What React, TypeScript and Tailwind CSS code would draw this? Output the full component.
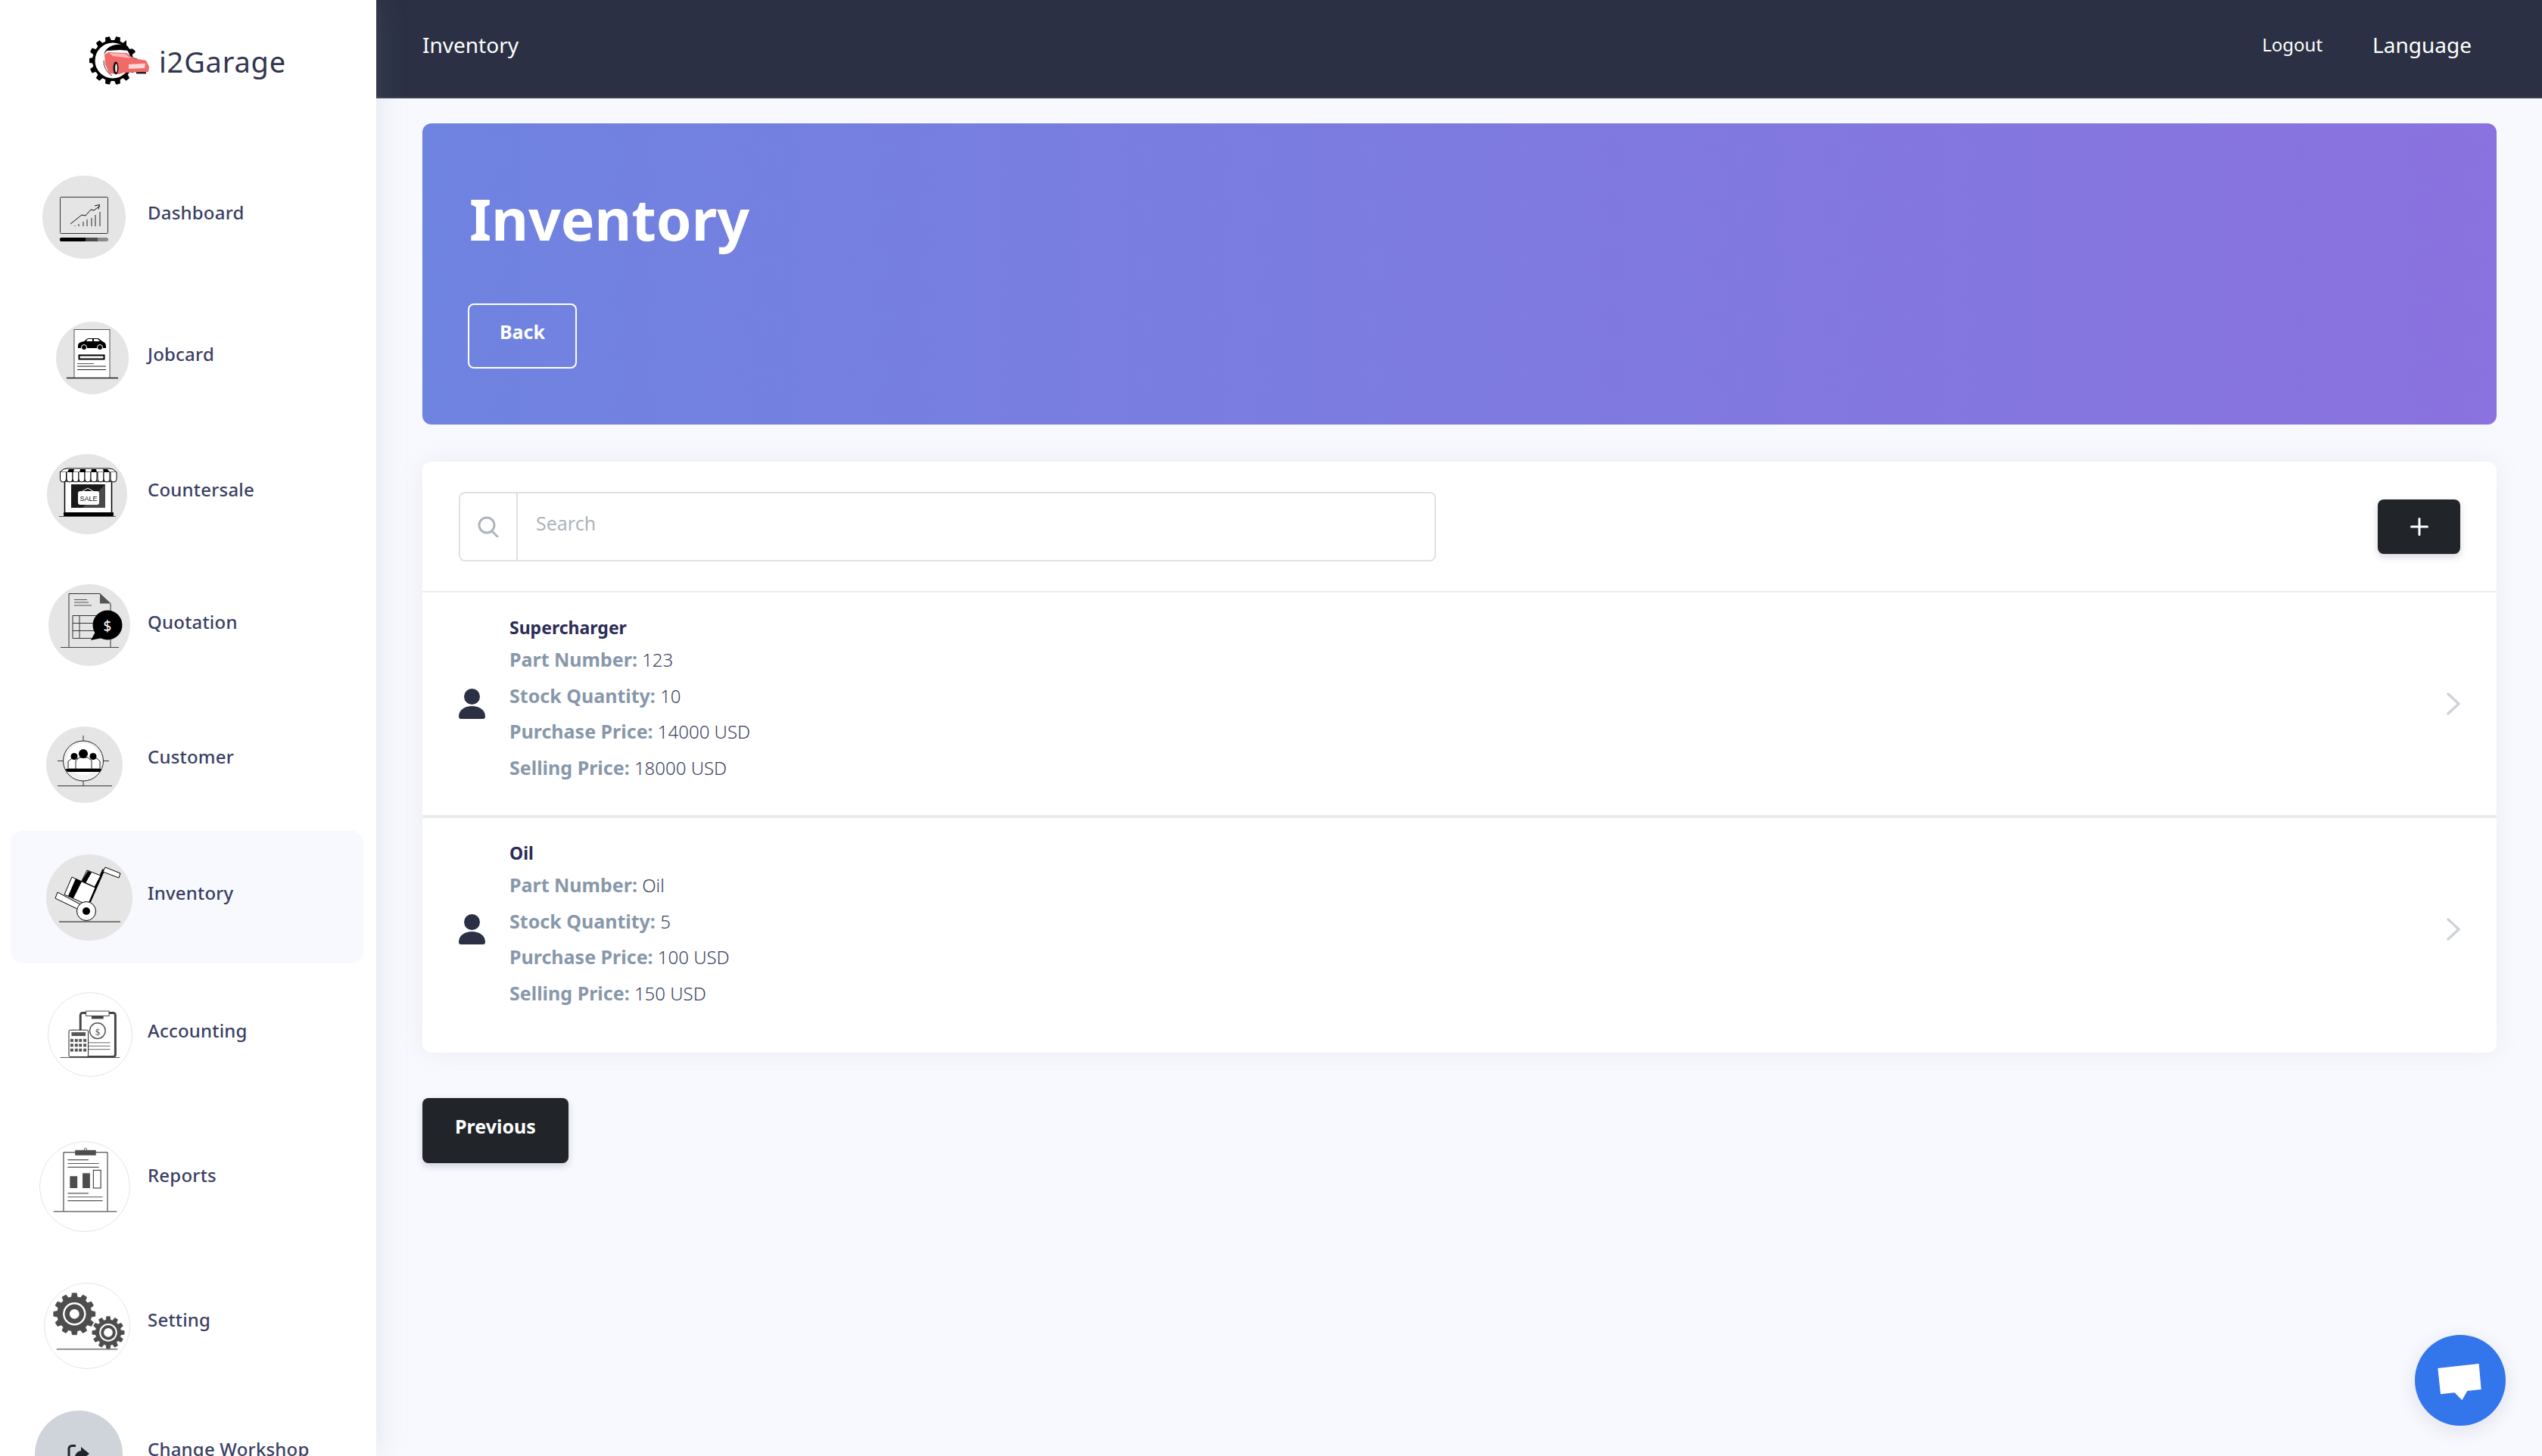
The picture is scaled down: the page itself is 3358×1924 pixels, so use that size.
import { useMemo } from 'react'

// gear outline with trapezoid teeth, used by the logo and the Setting icon
const gearPath = (cx: number, cy: number, rOut: number, rIn: number, teeth: number) => {
  const pts: string[] = []
  const step = (Math.PI * 2) / teeth
  for (let i = 0; i < teeth; i++) {
    const a = i * step
    const at = (r: number, t: number) =>
      `${(cx + r * Math.cos(a + t * step)).toFixed(2)} ${(cy + r * Math.sin(a + t * step)).toFixed(2)}`
    pts.push(at(rIn, -0.32), at(rOut, -0.2), at(rOut, 0.2), at(rIn, 0.32))
  }
  return `M${pts.join('L')}Z`
}

const Logo = () => (
  <svg className="w-[80px] h-[66px] shrink-0" viewBox="118 47 80 66">
    <path d={gearPath(149, 80, 32, 27, 14)} fill="#000" />
    <circle cx="149" cy="80" r="23.500" fill="#fff" />
    <path d="M137 72c3-9 12-14 22-13 5 1 9 4 12 8l-12-1-18 1z" fill="#000" />
    <path d="M137 80a22 22 0 0 0 11 20" stroke="#333" strokeWidth="1" fill="none" />
    <path d="M167 50l9 4 3 13-12-7z" fill="#fff" />
    <path d="M166 60a24 24 0 0 1 5 8" stroke="#000" strokeWidth="0.800" fill="none" />
    <rect x="176" y="92" width="22" height="21" fill="#fff" />
    <path d="M138 72l5-3 24 1 10 7 16 3 4 8-1 7-32 1-7 2-13-1-5-12z" fill="#f06a69" />
    <path d="M144 70l21 1 8 6-24-3z" fill="#f9b6b4" />
    <path d="M170 85l22-1-1 6-21 1z" fill="#fff" opacity="0.75" />
    <ellipse cx="153" cy="90" rx="3.500" ry="8.500" fill="#111" />
    <ellipse cx="153.500" cy="90" rx="1.300" ry="5.500" fill="#fff" />
    <rect x="180" y="95" width="13" height="2.500" fill="#222" />
  </svg>
)

const DashboardIcon = () => (
  <svg className="w-full h-full" viewBox="56 232 110 110">
    <rect x="79.500" y="260.500" width="63" height="48" rx="1" fill="none" stroke="#333" strokeWidth="1" />
    <path d="M93 296l15-12 5 1 7-8 4 1 8-6" fill="none" stroke="#111" strokeWidth="1" />
    <path d="M125 272l6.500-1.500-1.500 6" fill="none" stroke="#111" strokeWidth="1" />
    <path d="M99 299v-1M104 299v-3M110 299v-6M115 299v-9M121 299v-11M126 299v-15M132 299v-19" stroke="#222" strokeWidth="1" />
    <rect x="79" y="314" width="64" height="5" rx="2.500" fill="#8a8a8a" />
    <path d="M81.500 314H129v5H81.500a2.500 2.500 0 0 1 0-5z" fill="#4c4c4c" />
    <path d="M81.500 314H113v5H81.500a2.500 2.500 0 0 1 0-5z" fill="#000" />
  </svg>
)

const JobcardIcon = () => (
  <svg className="w-full h-full" viewBox="74 425 96 96">
    <rect x="98" y="435.500" width="47" height="64" fill="#fff" stroke="#555" strokeWidth="1" />
    <path d="M103 457c0-3 2-5 8-6l5-4h14l5 4c3 1 5 3 5 6v3h-37z" fill="#000" />
    <path d="M116 448h6v3h-8zM124 448h5l3 3h-8z" fill="#fff" />
    <circle cx="111" cy="459" r="3.500" fill="#000" stroke="#fff" strokeWidth="1" />
    <circle cx="132" cy="459" r="3.500" fill="#000" stroke="#fff" strokeWidth="1" />
    <rect x="104.500" y="469.500" width="33" height="5" fill="#fff" stroke="#000" strokeWidth="2" />
    <path d="M102 480.500h22" stroke="#555" strokeWidth="1" />
    <path d="M102 484h38M102 488.500h38" stroke="#222" strokeWidth="1" />
    <path d="M88 499.500h68" stroke="#222" strokeWidth="1.500" />
  </svg>
)

const CountersaleIcon = () => (
  <svg className="w-full h-full" viewBox="62 600 106 106">
    <rect x="85.500" y="636" width="62" height="43" fill="#fff" stroke="#000" strokeWidth="1.500" />
    <rect x="94" y="640" width="45" height="31" fill="#1a1a1a" />
    <path d="M139 640v31h-30z" fill="#4a4a4a" />
    <path d="M84 620l5-1h55l5 1 5 4H79z" fill="#fff" stroke="#000" strokeWidth="1" />
    <path d="M91 620h7l-1 4h-8zM106 620h7l0 4h-8zM121 620h6l1 4h-8zM136 620h6l3 4h-8z" fill="#000" />
    {[79.500, 88, 96, 104, 112, 120, 129, 137, 146].map((x) => (
      <path key={x} d={`M${x} 624v9a4 4 0 0 0 8 0v-9`} fill="#fff" stroke="#000" strokeWidth="1" />
    ))}
    <path d="M109 649l7-4 7 4" fill="none" stroke="#fff" strokeWidth="1" />
    <rect x="103" y="649" width="28" height="18" rx="3" fill="#fff" />
    <text x="117" y="662" textAnchor="middle" fontSize="9" fontWeight="500" fill="#111" fontFamily="'Liberation Sans', sans-serif">SALE</text>
    <rect x="84" y="677" width="66" height="5" rx="1" fill="#000" />
    <path d="M78 682.500h75" stroke="#555" strokeWidth="1" />
  </svg>
)

const QuotationIcon = () => (
  <svg className="w-full h-full" viewBox="64 772 108 108">
    <path d="M91 855V784.500h41l14 13V855" fill="none" stroke="#333" strokeWidth="1" />
    <path d="M132 784.500l14 13h-14z" fill="#555" />
    <path d="M98 792.500h17M98 796h19M98 800h23" stroke="#555" strokeWidth="1" />
    <path d="M96 813.500h35v30H96zM96 823.500h35M96 833.500h35M105 813.500v30" fill="none" stroke="#333" strokeWidth="1" />
    <circle cx="142" cy="826" r="19.500" fill="#000" />
    <path d="M126 835l-6 11 15-3z" fill="#000" />
    <text x="142" y="834" textAnchor="middle" fontSize="19" fill="#fff" fontFamily="'Noto Sans', sans-serif">$</text>
    <path d="M80 855.500h77" stroke="#444" strokeWidth="1" />
  </svg>
)

const CustomerIcon = () => (
  <svg className="w-full h-full" viewBox="61 960 101 101">
    <circle cx="110" cy="1005.500" r="26.500" fill="#f2f2f2" stroke="#222" strokeWidth="1" />
    <circle cx="110" cy="1003" r="21" fill="#fff" />
    <path d="M110 972v7M76 1005.500h8M136 1005.500h8M110 1032v7M76 1038.500h72" stroke="#333" strokeWidth="1" />
    <path d="M90 1016v-10l5-4h7l4 4v10zM117 1016v-10l4-4h7l4 4v10z" fill="#fff" stroke="#222" strokeWidth="1" />
    <path d="M100 1016v-11l5-4h11l5 4v11z" fill="#fff" stroke="#222" strokeWidth="1" />
    <circle cx="98" cy="999.500" r="4.500" fill="#000" />
    <circle cx="123" cy="999.500" r="4.500" fill="#000" />
    <circle cx="110" cy="996" r="6" fill="#000" />
    <path d="M86 1016h48l-2 4H89z" fill="#000" />
  </svg>
)

const InventoryIcon = () => (
  <svg className="w-full h-full" viewBox="61 1128 114 114">
    <path d="M78 1217h81" stroke="#555" strokeWidth="1.500" />
    <path d="M137 1148l-19 43" stroke="#000" strokeWidth="3.500" />
    <path d="M115 1149l18 7-8 15-17-8z" fill="#fff" stroke="#000" strokeWidth="1" />
    <path d="M116 1150l5 2-8 14-5-3z" fill="#000" />
    <path d="M95 1158l31 14-10 23-31-14z" fill="#fff" stroke="#000" strokeWidth="1" />
    <path d="M100 1160l8 4-11 22-7-3z" fill="#000" />
    <path d="M76 1178l30 16-2 7-31-15z" fill="#fff" stroke="#000" strokeWidth="1" strokeLinejoin="round" />
    <path d="M139 1145l20 8-2 6-21-8z" fill="#fff" stroke="#000" strokeWidth="1" strokeLinejoin="round" />
    <circle cx="114" cy="1203" r="12.500" fill="#fff" stroke="#000" strokeWidth="1" />
    <circle cx="114" cy="1203" r="5" fill="#000" />
  </svg>
)

const AccountingIcon = () => (
  <svg className="w-full h-full" viewBox="63 1311 112 112">
    <rect x="106" y="1338" width="47" height="59" rx="3" fill="#fff" stroke="#444" strokeWidth="3" />
    <rect x="121" y="1341" width="16" height="5" fill="#444" />
    <rect x="113.500" y="1335.500" width="31" height="6.500" fill="#fff" stroke="#444" strokeWidth="1" />
    <circle cx="129" cy="1362" r="10.500" fill="#fff" stroke="#555" strokeWidth="1.500" />
    <text x="129" y="1368" textAnchor="middle" fontSize="12" fill="#444" fontFamily="'Liberation Serif', serif">$</text>
    <path d="M117 1378h29M117 1382.500h29M117 1387h29" stroke="#666" strokeWidth="1" />
    <rect x="90.500" y="1361" width="26" height="36" rx="2" fill="#fff" stroke="#222" strokeWidth="1" />
    <rect x="94" y="1364" width="19" height="5" fill="#555" />
    {[1375, 1381.500, 1388].map((y) =>
      [92.500, 98.500, 104, 110].map((x) => <rect key={`${x}-${y}`} x={x} y={y - 2} width="4" height="4" fill="#555" />),
    )}
    <path d="M79 1398h80" stroke="#555" strokeWidth="1" />
  </svg>
)

const ReportsIcon = () => (
  <svg className="w-full h-full" viewBox="52 1508 120 120">
    <path d="M83.500 1601v-79h59v79" fill="none" stroke="#222" strokeWidth="1" />
    <circle cx="113" cy="1518" r="1.700" fill="none" stroke="#444" strokeWidth="0.800" />
    <rect x="99" y="1519" width="28" height="7" fill="#4d4d4d" />
    <path d="M89 1532h28M89 1537h42M89 1542h42M89 1577h28M89 1582h47M89 1587h47" stroke="#555" strokeWidth="1.200" />
    <rect x="92" y="1554" width="10" height="16" fill="#4d4d4d" />
    <rect x="109" y="1550" width="10" height="20" fill="#4d4d4d" />
    <rect x="123.500" y="1546" width="10" height="24" fill="#fff" stroke="#222" strokeWidth="1" />
    <path d="M70 1601.500h85" stroke="#222" strokeWidth="1" />
  </svg>
)

const SettingIcon = () => {
  const big = useMemo(() => gearPath(98, 1736, 28, 23, 12), [])
  const small = useMemo(() => gearPath(143.500, 1761, 21.500, 17, 12), [])
  return (
    <svg className="w-full h-full" viewBox="58 1695 114 114">
      <path d={big} fill="#4d4d4d" strokeLinejoin="round" stroke="#4d4d4d" strokeWidth="1" />
      <circle cx="98" cy="1736" r="15.500" fill="#fff" />
      <circle cx="98" cy="1736" r="13" fill="#4d4d4d" />
      <circle cx="98" cy="1736" r="6.500" fill="#fff" />
      <path d={small} fill="#4d4d4d" strokeLinejoin="round" stroke="#4d4d4d" strokeWidth="1" />
      <circle cx="143.500" cy="1761" r="12" fill="#fff" />
      <circle cx="143.500" cy="1761" r="10" fill="#4d4d4d" />
      <circle cx="143.500" cy="1761" r="6" fill="#fff" />
      <path d="M74 1783.500h82" stroke="#555" strokeWidth="1.200" />
    </svg>
  )
}

const WorkshopIcon = () => (
  <svg className="w-full h-full" viewBox="46 1864 116 116">
    <path d="M100 1910.500h-5a4 4 0 0 0-4 4v26a4 4 0 0 0 4 4h17" fill="none" stroke="#212529" strokeWidth="3" />
    <path d="M107 1912l11 9-11 9v-5c-5 0-7 1-9 5 0-7 3-12 9-13z" fill="#212529" />
  </svg>
)

const navItems = [
  { label: 'Dashboard', box: 'mt-0 h-[170px]', circle: 'ml-[42px] w-[110px] h-[110px] bg-[#e5e5e5]', text: 'mb-[12px]', Icon: DashboardIcon },
  { label: 'Jobcard', box: 'mt-[23px] h-[156px]', circle: 'ml-[60px] w-[96px] h-[96px] bg-[#e5e5e5]', text: 'mb-[10px]', Icon: JobcardIcon },
  { label: 'Countersale', box: 'mt-[19px] h-[165px]', circle: 'ml-[48px] w-[106px] h-[106px] bg-[#e5e5e5]', text: 'mb-[11px]', Icon: CountersaleIcon },
  { label: 'Quotation', box: 'mt-[7px] h-[167px]', circle: 'ml-[50px] w-[108px] h-[108px] bg-[#e5e5e5]', text: 'mb-[7px]', Icon: QuotationIcon },
  { label: 'Customer', box: 'mt-[21px] h-[161px]', circle: 'ml-[47px] w-[101px] h-[101px] bg-[#e5e5e5]', text: 'mb-[21px]', Icon: CustomerIcon },
  { label: 'Inventory', box: 'mt-[7px] h-[175px] bg-[#f8f9fe]', circle: 'ml-[47px] w-[114px] h-[114px] bg-[#e5e5e5]', text: 'mb-[11px]', Icon: InventoryIcon },
  { label: 'Accounting', box: 'mt-[8px] h-[171px]', circle: 'ml-[49px] w-[112px] h-[112px] border border-[#e5e5e5]', text: 'mb-[9px]', Icon: AccountingIcon },
  { label: 'Reports', box: 'mt-[26px] h-[179px]', circle: 'ml-[38px] w-[120px] h-[120px] border border-[#e5e5e5]', text: 'mb-[29px]', Icon: ReportsIcon },
  { label: 'Setting', box: 'mt-[8px] h-[173px]', circle: 'ml-[44px] w-[114px] h-[114px] border border-[#e5e5e5]', text: 'mb-[15px]', Icon: SettingIcon },
  { label: 'Change Workshop', box: '-mt-[4px] h-[176px]', circle: 'ml-[32px] w-[116px] h-[116px] bg-[#ced4da]', text: 'mb-[14px]', Icon: WorkshopIcon },
]

const parts = [
  {
    name: 'Supercharger',
    rows: [
      ['Part Number:', '123'],
      ['Stock Quantity:', '10'],
      ['Purchase Price:', '14000 USD'],
      ['Selling Price:', '18000 USD'],
    ],
  },
  {
    name: 'Oil',
    rows: [
      ['Part Number:', 'Oil'],
      ['Stock Quantity:', '5'],
      ['Purchase Price:', '100 USD'],
      ['Selling Price:', '150 USD'],
    ],
  },
]

const App = () => {
  return (
    <div className="h-screen flex overflow-hidden bg-[#f8f9fe] font-['Noto_Sans',sans-serif]">
      {/* sidebar */}
      <aside className="w-[497px] shrink-0 h-full bg-white shadow-[0_0_40px_rgba(136,152,170,0.2)] z-10 overflow-hidden">
        <div className="h-[202px] pt-[47px] pl-[118px] flex items-start">
          <Logo />
          <span className="ml-[12px] mt-[10px] text-[38px] leading-[48px] tracking-[0.8px] text-[#30354e]">i2Garage</span>
        </div>
        <nav className="ml-[14px] w-[466px]">
          {navItems.map(({ label, box, circle, text, Icon }) => (
            <div key={label} className={`flex items-center rounded-[16px] ${box}`}>
              <div className="w-[181px] shrink-0">
                <div className={`rounded-full overflow-hidden ${circle}`}>
                  <Icon />
                </div>
              </div>
              <span className={`text-[24px] font-medium leading-[32px] tracking-[0.2px] whitespace-nowrap text-[#3a3f63] ${text}`}>{label}</span>
            </div>
          ))}
        </nav>
      </aside>

      {/* main */}
      <main className="flex-1 min-w-0 flex flex-col">
        <header className="h-[130px] shrink-0 flex items-center justify-between pl-[61px] pr-[93px] bg-[#2b3044] border-b-2 border-[#3a3f52] text-white">
          <span className="text-[28px] leading-[40px] mb-[10px]">Inventory</span>
          <div className="flex items-center gap-[66px] mb-[10px]">
            <span className="text-[24px] leading-[40px]">Logout</span>
            <span className="text-[28px] leading-[40px]">Language</span>
          </div>
        </header>

        <div className="pl-[61px] pr-[60px] pt-[33px]">
          <section className="h-[398px] rounded-[12px] bg-gradient-to-r from-[#6f83e0] to-[#8a72df] pl-[60px] pt-[78px]">
            <h1 className="ml-[2px] text-[75px] leading-[96px] font-bold text-white">Inventory</h1>
            <button className="mt-[64px] block w-[144px] h-[86px] pb-[10px] rounded-[8px] border-2 border-white text-white text-[25px] font-bold">Back</button>
          </section>

          <section className="mt-[49px] rounded-[12px] bg-white pb-[16px] shadow-[0_0_32px_rgba(136,152,170,0.12)]">
            <div className="h-[173px] flex items-start justify-between pl-[48px] pr-[48px] border-b-2 border-[#e9ecef]">
              <div className="mt-[40px] w-[1291px] h-[92px] flex rounded-[8px] border-2 border-[#dee2e6]">
                <div className="w-[76px] shrink-0 flex items-center justify-center border-r-2 border-[#dee2e6]">
                  <svg className="w-[28px] h-[28px]" viewBox="0 0 28 28" fill="none" stroke="#adb5bd" strokeWidth="3">
                    <circle cx="12" cy="12" r="10" />
                    <path d="M19 20l7 7" strokeLinecap="round" />
                  </svg>
                </div>
                <input
                  placeholder="Search"
                  className="flex-1 min-w-0 pl-[24px] pb-[8px] text-[25px] outline-none bg-transparent placeholder:text-[#adb5bd]"
                />
              </div>
              <button className="mt-[50px] w-[109px] h-[72px] flex items-center justify-center rounded-[8px] bg-[#212529] shadow-[0_4px_10px_rgba(50,50,93,0.2)]">
                <svg className="w-[24px] h-[24px]" viewBox="0 0 24 24" stroke="#fff" strokeWidth="3" strokeLinecap="round">
                  <path d="M12 1.500v21M1.500 12h21" />
                </svg>
              </button>
            </div>

            {parts.map((part, i) => (
              <div
                key={part.name}
                className={`flex items-center pl-[48px] pr-[48px] ${i === 0 ? 'h-[298px] border-b-4 border-[#e9ecef]' : 'h-[294px]'}`}
              >
                <svg className="w-[35px] h-[40px] shrink-0" viewBox="0 0 35 40" fill="#2b3044">
                  <circle cx="17.500" cy="10.500" r="10.500" />
                  <path d="M0 37c0-9 8-14 17.500-14S35 28 35 37c0 2-1 3-3 3H3c-2 0-3-1-3-3z" />
                </svg>
                <div className="ml-[32px] mb-[5px] flex-1">
                  <div className="text-[23px] leading-[30px] font-bold text-[#2b2d55]">{part.name}</div>
                  <div className="mt-[7px] flex flex-col">
                    {part.rows.map(([label, value]) => (
                      <div key={label} className="h-[47.500px] leading-[40px] text-[24px] font-light text-[#3a3f63]">
                        <span className="text-[25px] font-bold text-[#8898aa]">{label}</span> {value}
                      </div>
                    ))}
                  </div>
                </div>
                <svg className="w-[18px] h-[30px] shrink-0" viewBox="0 0 18 30" fill="none" stroke="#ced4da" strokeWidth="3.500" strokeLinecap="round" strokeLinejoin="round">
                  <path d="M2 2l14 13L2 28" />
                </svg>
              </div>
            ))}
          </section>

          <button className="mt-[60px] block w-[193px] h-[86px] pb-[10px] rounded-[8px] bg-[#212529] text-white text-[25px] font-bold shadow-[0_4px_10px_rgba(50,50,93,0.2)]">Previous</button>
        </div>
      </main>

      {/* chat launcher */}
      <button className="fixed right-[48px] bottom-[40px] z-20 w-[120px] h-[120px] rounded-full bg-[#3375ea] shadow-[0_6px_24px_rgba(50,50,93,0.12)]">
        <svg className="w-[120px] h-[120px]" viewBox="270 191 360 360">
          <path d="M361 323l163-18 9 102-55 6-21 37-29-30-56 6z" fill="#fff" />
        </svg>
      </button>
    </div>
  )
}

export default App
